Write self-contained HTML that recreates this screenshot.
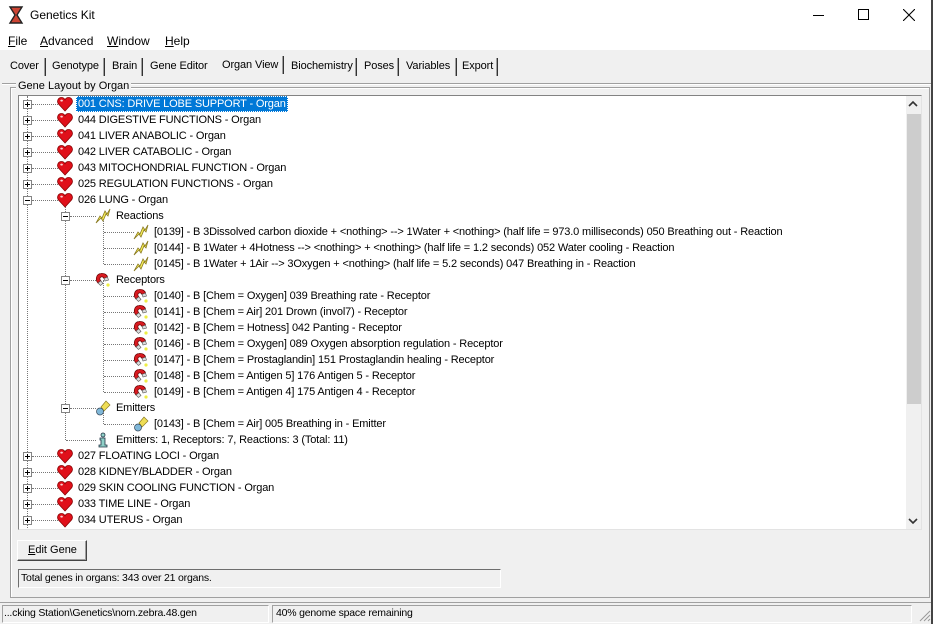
<!DOCTYPE html>
<html><head><meta charset="utf-8"><style>
*{margin:0;padding:0;box-sizing:border-box}
body{width:933px;height:624px;background:#f0f0f0;font-family:"Liberation Sans",sans-serif;font-size:12px;color:#000;position:relative;overflow:hidden}
.a{position:absolute;white-space:nowrap}
#title{left:0;top:0;width:933px;height:50px;background:#fff}
.tab{top:60px;font-size:11px;letter-spacing:-0.1px}
.sep{top:58px;width:2px;height:18px;border-left:1px solid #a0a0a0;border-right:1px solid #333}
#tree{left:18px;top:95px;width:904px;height:435px;background:#fff;border:1px solid #828282;border-right-color:#e3e3e3;border-bottom-color:#e3e3e3;overflow:hidden}
.r{position:absolute;height:16px;line-height:16px;white-space:nowrap;font-size:11px;letter-spacing:-0.15px}
.box{position:absolute;width:9px;height:9px;border:1px solid #848484;background:#fff}
.box::before{content:"";position:absolute;left:1px;top:3px;width:5px;height:1px;background:#000}
.box.p::after{content:"";position:absolute;left:3px;top:1px;width:1px;height:5px;background:#000}
.hl{position:absolute;height:1px;border-top:1px dotted #777}
.vl{position:absolute;width:1px;border-left:1px dotted #777}
svg.i{position:absolute;width:16px;height:16px}
</style></head><body>
<svg width="0" height="0" style="position:absolute">
<defs>
<symbol id="heart" viewBox="0 0 16 16"><path d="M8 15 L1.5 8 C-0.5 5.5 1 1.5 4.5 1.5 C6.3 1.5 7.4 2.6 8 3.8 C8.6 2.6 9.7 1.5 11.5 1.5 C15 1.5 16.5 5.5 14.5 8 Z" fill="#e0101a" stroke="#800" stroke-width="0.8"/><ellipse cx="4.6" cy="4.6" rx="1.3" ry="1" fill="#fff" opacity=".8"/></symbol>
<symbol id="bolt" viewBox="0 0 16 16"><path d="M1 15 L5 8 L7 10 L10 3 L12 6 L15 1 L13 8 L11 6 L8 13 L6 10 Z" fill="#f6ee5a" stroke="#8a7a20" stroke-width="0.8"/></symbol>
<symbol id="mag" viewBox="0 0 16 16"><path d="M3 11 C0 8 1 2 6 1.5 C10 1 12 3 12.5 5 L9 6.5 C8.5 5 7 4.5 6 5 C4.5 5.5 4.5 7.5 5.8 8.8 Z" fill="#d81a20" stroke="#600" stroke-width="0.7"/><path d="M3 11 L5.8 8.8 L8 11.5 L5.5 13.5 Z M9 6.5 L12.5 5 L13.5 8 L10 9 Z" fill="#ddd" stroke="#555" stroke-width="0.6"/><circle cx="13" cy="13" r="1.6" fill="#ee4"/></symbol>
<symbol id="emit" viewBox="0 0 16 16"><path d="M6 7 L11 1 L15 5 L9 11 Z" fill="#eedd55" stroke="#8a7a20" stroke-width="0.7"/><circle cx="5" cy="11.5" r="3.5" fill="#7fb7d8" stroke="#345" stroke-width="0.7"/></symbol>
<symbol id="info" viewBox="0 0 16 16"><circle cx="8" cy="3" r="2" fill="#8fd0c8" stroke="#234" stroke-width="0.8"/><path d="M5 6 H10 V13 H12 V15 H4 V13 H6 V8 H5 Z" fill="#8fd0c8" stroke="#234" stroke-width="0.8"/></symbol>
</defs></svg>

<div id="title" class="a"></div>
<svg class="a" style="left:8px;top:6px" width="16" height="18" viewBox="0 0 16 18"><path d="M2 1 H14 L9 9 L14 17 H2 L7 9 Z" fill="#c43" stroke="#222" stroke-width="1.4"/></svg>
<div class="a" style="left:30px;top:8px;font-size:12px">Genetics Kit</div>
<div class="a" style="left:813px;top:15px;width:11px;height:1px;background:#000"></div>
<div class="a" style="left:858px;top:9px;width:11px;height:11px;border:1px solid #000"></div>
<svg class="a" style="left:903px;top:9px" width="12" height="12"><path d="M0 0 L12 12 M12 0 L0 12" stroke="#000" stroke-width="1.1"/></svg>
<div class="a" style="left:8px;top:34px"><u>F</u>ile</div>
<div class="a" style="left:40px;top:34px"><u>A</u>dvanced</div>
<div class="a" style="left:107px;top:34px"><u>W</u>indow</div>
<div class="a" style="left:165px;top:34px"><u>H</u>elp</div>

<div class="a tab" style="left:10px">Cover</div><div class="a sep" style="left:44px"></div>
<div class="a tab" style="left:52px">Genotype</div><div class="a sep" style="left:103px"></div>
<div class="a tab" style="left:112px">Brain</div><div class="a sep" style="left:141px"></div>
<div class="a tab" style="left:150px">Gene Editor</div>
<div class="a tab" style="left:222px;top:59px">Organ View</div><div class="a sep" style="left:282px;top:56px"></div>
<div class="a tab" style="left:291px">Biochemistry</div><div class="a sep" style="left:355px"></div>
<div class="a tab" style="left:364px">Poses</div><div class="a sep" style="left:397px"></div>
<div class="a tab" style="left:406px">Variables</div><div class="a sep" style="left:455px"></div>
<div class="a tab" style="left:462px">Export</div><div class="a sep" style="left:496px"></div>
<div class="a" style="left:2px;top:83px;width:929px;height:2px;border-top:1px solid #a0a0a0;border-bottom:1px solid #fff"></div>

<div class="a" style="left:10px;top:87px;width:920px;height:511px;border:1px solid #a0a0a0;box-shadow:1px 1px 0 #fff inset"></div>
<div class="a" style="left:16px;top:80px;background:#f0f0f0;padding:0 2px;font-size:11px">Gene Layout by Organ</div>

<div id="tree" class="a">
<div class="vl" style="left:8px;top:0;height:434px"></div>
<div class="vl" style="left:46px;top:104px;height:240px"></div>
<div class="vl" style="left:84px;top:120px;height:48px"></div>
<div class="vl" style="left:84px;top:184px;height:112px"></div>
<div class="vl" style="left:84px;top:312px;height:16px"></div>
</div>

<div class="a" style="left:906px;top:96px;width:15px;height:433px;background:#f0f0f0"></div>
<div class="a" style="left:907px;top:114px;width:14px;height:290px;background:#cdcdcd"></div>
<svg class="a" style="left:908px;top:100px" width="10" height="8"><path d="M1 6 L5 2 L9 6" stroke="#333" stroke-width="1.6" fill="none"/></svg>
<svg class="a" style="left:908px;top:517px" width="10" height="8"><path d="M1 2 L5 6 L9 2" stroke="#333" stroke-width="1.6" fill="none"/></svg>

<div class="a" style="left:17px;top:540px;width:70px;height:21px;border:1px solid #fff;border-right-color:#444;border-bottom-color:#444;box-shadow:-1px -1px 0 #a0a0a0 inset"></div>
<div class="a" style="left:28px;top:544px;font-size:11px"><u>E</u>dit Gene</div>
<div class="a" style="left:18px;top:569px;width:483px;height:19px;border:1px solid #6d6d6d;border-right-color:#fff;border-bottom-color:#fff"></div>
<div class="a" style="left:21px;top:572px;font-size:10.5px;letter-spacing:-0.2px">Total genes in organs: 343 over 21 organs.</div>

<div class="a" style="left:0;top:602px;width:933px;height:1px;background:#a0a0a0"></div>
<div class="a" style="left:2px;top:605px;width:267px;height:18px;border:1px solid #a0a0a0;border-right-color:#fff;border-bottom-color:#fff"></div>
<div class="a" style="left:272px;top:605px;width:640px;height:18px;border:1px solid #a0a0a0;border-right-color:#fff;border-bottom-color:#fff"></div>
<div class="a" style="left:4px;top:607px;font-size:10.5px;letter-spacing:-0.2px">...cking Station\Genetics\norn.zebra.48.gen</div>
<div class="a" style="left:276px;top:607px;font-size:10.5px;letter-spacing:-0.2px">40% genome space remaining</div>
<svg class="a" style="left:918px;top:609px" width="13" height="13"><path d="M12 2 L2 12 M12 6 L6 12 M12 10 L10 12" stroke="#999" stroke-width="1"/></svg>
<div class="a" style="left:931px;top:0;width:2px;height:624px;background:#444"></div>

<div id="rows" class="a" style="left:0;top:0">
<div class="hl" style="left:32px;top:104px;width:26px"></div><div class="box p" style="left:23px;top:100px"></div><svg class="i" style="left:57px;top:96px"><use href="#heart"/></svg><div class="r" style="left:76px;top:96px;background:#0078d7;color:#fff;padding:0 2px;outline:1px dotted #fff;outline-offset:-1px">001 CNS: DRIVE LOBE SUPPORT - Organ</div>
<div class="hl" style="left:32px;top:120px;width:26px"></div><div class="box p" style="left:23px;top:116px"></div><svg class="i" style="left:57px;top:112px"><use href="#heart"/></svg><div class="r" style="left:78px;top:112px">044 DIGESTIVE FUNCTIONS - Organ</div>
<div class="hl" style="left:32px;top:136px;width:26px"></div><div class="box p" style="left:23px;top:132px"></div><svg class="i" style="left:57px;top:128px"><use href="#heart"/></svg><div class="r" style="left:78px;top:128px">041 LIVER ANABOLIC - Organ</div>
<div class="hl" style="left:32px;top:152px;width:26px"></div><div class="box p" style="left:23px;top:148px"></div><svg class="i" style="left:57px;top:144px"><use href="#heart"/></svg><div class="r" style="left:78px;top:144px">042 LIVER CATABOLIC - Organ</div>
<div class="hl" style="left:32px;top:168px;width:26px"></div><div class="box p" style="left:23px;top:164px"></div><svg class="i" style="left:57px;top:160px"><use href="#heart"/></svg><div class="r" style="left:78px;top:160px">043 MITOCHONDRIAL FUNCTION - Organ</div>
<div class="hl" style="left:32px;top:184px;width:26px"></div><div class="box p" style="left:23px;top:180px"></div><svg class="i" style="left:57px;top:176px"><use href="#heart"/></svg><div class="r" style="left:78px;top:176px">025 REGULATION FUNCTIONS - Organ</div>
<div class="hl" style="left:32px;top:200px;width:26px"></div><div class="box" style="left:23px;top:196px"></div><svg class="i" style="left:57px;top:192px"><use href="#heart"/></svg><div class="r" style="left:78px;top:192px">026 LUNG - Organ</div>
<div class="hl" style="left:70px;top:216px;width:26px"></div><div class="box" style="left:61px;top:212px"></div><svg class="i" style="left:95px;top:208px"><use href="#bolt"/></svg><div class="r" style="left:116px;top:208px">Reactions</div>
<div class="hl" style="left:104px;top:232px;width:30px"></div><svg class="i" style="left:133px;top:224px"><use href="#bolt"/></svg><div class="r" style="left:154px;top:224px">[0139] - B 3Dissolved carbon dioxide + &lt;nothing&gt; --&gt; 1Water + &lt;nothing&gt; (half life = 973.0 milliseconds)  050 Breathing out - Reaction</div>
<div class="hl" style="left:104px;top:248px;width:30px"></div><svg class="i" style="left:133px;top:240px"><use href="#bolt"/></svg><div class="r" style="left:154px;top:240px">[0144] - B 1Water + 4Hotness --&gt; &lt;nothing&gt; + &lt;nothing&gt; (half life = 1.2 seconds)  052 Water cooling - Reaction</div>
<div class="hl" style="left:104px;top:264px;width:30px"></div><svg class="i" style="left:133px;top:256px"><use href="#bolt"/></svg><div class="r" style="left:154px;top:256px">[0145] - B 1Water + 1Air --&gt; 3Oxygen + &lt;nothing&gt; (half life = 5.2 seconds)  047 Breathing in - Reaction</div>
<div class="hl" style="left:70px;top:280px;width:26px"></div><div class="box" style="left:61px;top:276px"></div><svg class="i" style="left:95px;top:272px"><use href="#mag"/></svg><div class="r" style="left:116px;top:272px">Receptors</div>
<div class="hl" style="left:104px;top:296px;width:30px"></div><svg class="i" style="left:133px;top:288px"><use href="#mag"/></svg><div class="r" style="left:154px;top:288px">[0140] - B [Chem = Oxygen] 039 Breathing rate - Receptor</div>
<div class="hl" style="left:104px;top:312px;width:30px"></div><svg class="i" style="left:133px;top:304px"><use href="#mag"/></svg><div class="r" style="left:154px;top:304px">[0141] - B [Chem = Air] 201 Drown (invol7) - Receptor</div>
<div class="hl" style="left:104px;top:328px;width:30px"></div><svg class="i" style="left:133px;top:320px"><use href="#mag"/></svg><div class="r" style="left:154px;top:320px">[0142] - B [Chem = Hotness] 042 Panting - Receptor</div>
<div class="hl" style="left:104px;top:344px;width:30px"></div><svg class="i" style="left:133px;top:336px"><use href="#mag"/></svg><div class="r" style="left:154px;top:336px">[0146] - B [Chem = Oxygen] 089 Oxygen absorption regulation - Receptor</div>
<div class="hl" style="left:104px;top:360px;width:30px"></div><svg class="i" style="left:133px;top:352px"><use href="#mag"/></svg><div class="r" style="left:154px;top:352px">[0147] - B [Chem = Prostaglandin] 151 Prostaglandin healing - Receptor</div>
<div class="hl" style="left:104px;top:376px;width:30px"></div><svg class="i" style="left:133px;top:368px"><use href="#mag"/></svg><div class="r" style="left:154px;top:368px">[0148] - B [Chem = Antigen 5] 176 Antigen 5 - Receptor</div>
<div class="hl" style="left:104px;top:392px;width:30px"></div><svg class="i" style="left:133px;top:384px"><use href="#mag"/></svg><div class="r" style="left:154px;top:384px">[0149] - B [Chem = Antigen 4] 175 Antigen 4 - Receptor</div>
<div class="hl" style="left:70px;top:408px;width:26px"></div><div class="box" style="left:61px;top:404px"></div><svg class="i" style="left:95px;top:400px"><use href="#emit"/></svg><div class="r" style="left:116px;top:400px">Emitters</div>
<div class="hl" style="left:104px;top:424px;width:30px"></div><svg class="i" style="left:133px;top:416px"><use href="#emit"/></svg><div class="r" style="left:154px;top:416px">[0143] - B [Chem = Air] 005 Breathing in - Emitter</div>
<div class="hl" style="left:66px;top:440px;width:30px"></div><svg class="i" style="left:95px;top:432px"><use href="#info"/></svg><div class="r" style="left:116px;top:432px">Emitters: 1, Receptors: 7, Reactions: 3 (Total: 11)</div>
<div class="hl" style="left:32px;top:456px;width:26px"></div><div class="box p" style="left:23px;top:452px"></div><svg class="i" style="left:57px;top:448px"><use href="#heart"/></svg><div class="r" style="left:78px;top:448px">027 FLOATING LOCI - Organ</div>
<div class="hl" style="left:32px;top:472px;width:26px"></div><div class="box p" style="left:23px;top:468px"></div><svg class="i" style="left:57px;top:464px"><use href="#heart"/></svg><div class="r" style="left:78px;top:464px">028 KIDNEY/BLADDER - Organ</div>
<div class="hl" style="left:32px;top:488px;width:26px"></div><div class="box p" style="left:23px;top:484px"></div><svg class="i" style="left:57px;top:480px"><use href="#heart"/></svg><div class="r" style="left:78px;top:480px">029 SKIN COOLING FUNCTION - Organ</div>
<div class="hl" style="left:32px;top:504px;width:26px"></div><div class="box p" style="left:23px;top:500px"></div><svg class="i" style="left:57px;top:496px"><use href="#heart"/></svg><div class="r" style="left:78px;top:496px">033 TIME LINE - Organ</div>
<div class="hl" style="left:32px;top:520px;width:26px"></div><div class="box p" style="left:23px;top:516px"></div><svg class="i" style="left:57px;top:512px"><use href="#heart"/></svg><div class="r" style="left:78px;top:512px">034 UTERUS - Organ</div>
</div>
</body></html>
